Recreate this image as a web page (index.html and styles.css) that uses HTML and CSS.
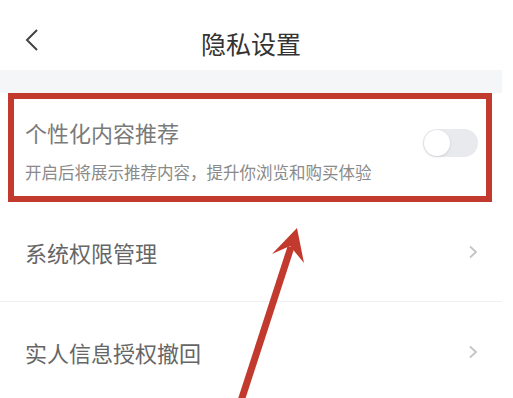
FILE: index.html
```html
<!DOCTYPE html>
<html lang="zh-CN">
<head>
<meta charset="utf-8">
<title>隐私设置</title>
<link rel="stylesheet" href="styles.css">
</head>
<body>
<div class="screen">
  <div class="statusbar"></div>
  <header class="navbar">
    <svg class="back" width="14" height="24" viewBox="0 0 14 24"><path d="M12 2 L2 12 L12 22" fill="none" stroke="#444" stroke-width="2"/></svg>
    <h1 class="title">隐私设置</h1>
  </header>
  <div class="band"></div>
  <div class="item highlight">
    <div class="item-text">
      <div class="item-title">个性化内容推荐</div>
      <div class="item-desc">开启后将展示推荐内容，提升你浏览和购买体验</div>
    </div>
    <div class="toggle"><span class="knob"></span></div>
  </div>
  <div class="row">
    <span class="row-label">系统权限管理</span>
    <svg class="chev" width="10" height="14" viewBox="0 0 10 14"><path d="M2 1.5 L8 7 L2 12.5" fill="none" stroke="#c4c4c4" stroke-width="1.8"/></svg>
  </div>
  <div class="row">
    <span class="row-label">实人信息授权撤回</span>
    <svg class="chev" width="10" height="14" viewBox="0 0 10 14"><path d="M2 1.5 L8 7 L2 12.5" fill="none" stroke="#c4c4c4" stroke-width="1.8"/></svg>
  </div>
</div>
<svg class="arrow" width="513" height="398" viewBox="0 0 513 398">
  <line x1="240" y1="404" x2="291" y2="247" stroke="#c23a2e" stroke-width="7"/>
  <polygon points="297,228 272,254 290,246 304,263" fill="#c23a2e"/>
</svg>
</body>
</html>
```
FILE: styles.css
```css
html, body {
  margin: 0;
  padding: 0;
  background: #ffffff;
  overflow: hidden;
}
body {
  width: 513px;
  height: 398px;
  position: relative;
  font-family: "Noto Sans CJK SC", "Noto Sans", sans-serif;
}
.screen {
  width: 502px;
  background: #ffffff;
}
.statusbar {
  height: 18px;
}
.navbar {
  height: 52px;
  display: flex;
  align-items: center;
  justify-content: center;
  position: relative;
}
.back {
  position: absolute;
  left: 25px;
  top: 10px;
}
.title {
  margin: 0;
  font-size: 25px;
  font-weight: 400;
  color: #333333;
  line-height: 30px;
  margin-top: -2px;
}
.band {
  height: 23px;
  background: #f5f6f8;
}
.item {
  display: flex;
  justify-content: space-between;
  align-items: flex-start;
  margin: 0 10px 0 8px;
  padding: 19px 8px 13px 11px;
  background: #ffffff;
}
.highlight {
  border: 6px solid #c23a2e;
}
.item-title {
  font-size: 22px;
  line-height: 28px;
  color: #7a7a7a;
}
.item-desc {
  margin-top: 15px;
  font-size: 16.5px;
  line-height: 22px;
  color: #8a8a8a;
}
.toggle {
  margin-top: 11px;
  width: 55px;
  height: 28px;
  border-radius: 14px;
  background: #e9eaed;
  display: flex;
  align-items: center;
  padding-left: 1px;
  box-sizing: border-box;
}
.knob {
  width: 26px;
  height: 26px;
  border-radius: 50%;
  background: #ffffff;
  box-shadow: 0 1px 3px rgba(0,0,0,0.12);
}
.row {
  height: 99px;
  display: flex;
  align-items: center;
  justify-content: space-between;
  padding: 0 24px 0 25px;
  border-bottom: 1px solid #efefef;
}
.row-label {
  font-size: 22px;
  color: #666666;
  line-height: 28px;
}
.chev {
  display: block;
}
.arrow {
  position: absolute;
  left: 0;
  top: 0;
  pointer-events: none;
}
```
